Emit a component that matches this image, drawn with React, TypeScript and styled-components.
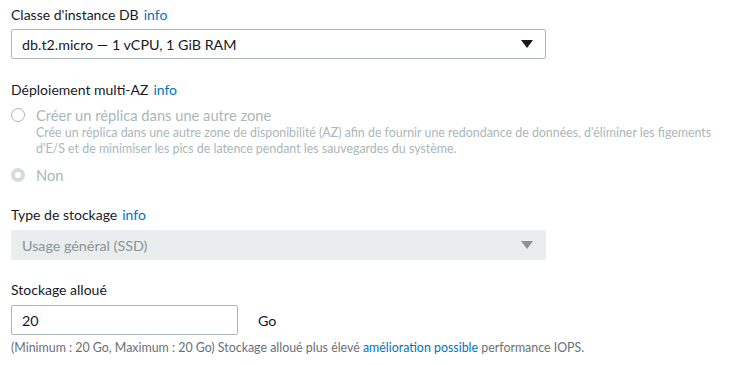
import React from 'react';
import styled, { createGlobalStyle } from 'styled-components';

const GlobalStyle = createGlobalStyle`
  body {
    margin: 0;
    background: #ffffff;
    font-family: Lato, "Open Sans", "Liberation Sans", sans-serif;
    color: #16191f;
  }
`;

const Page = styled.div`
  padding: 5px 11px 0 11px;
  display: flex;
  flex-direction: column;
`;

const Field = styled.div<{ $gap?: number }>`
  display: flex;
  flex-direction: column;
  margin-top: ${(p) => p.$gap ?? 0}px;
`;

const Label = styled.div<{ $space?: number }>`
  font-size: 14px;
  line-height: 20px;
  color: #16191f;
  margin-bottom: ${(p) => p.$space ?? 5}px;
  white-space: nowrap;
`;

const Info = styled.a`
  color: #0073bb;
  margin-left: 5px;
  text-decoration: none;
`;

const Select = styled.div<{ $disabled?: boolean }>`
  width: 535px;
  height: 30px;
  box-sizing: border-box;
  border: 1px solid ${(p) => (p.$disabled ? '#eaeded' : '#aab7b8')};
  background: ${(p) => (p.$disabled ? '#eaeded' : '#ffffff')};
  border-radius: 2px;
  display: flex;
  align-items: center;
  justify-content: space-between;
  padding: 0 12px 0 10px;
  font-size: 14.3px;
  color: ${(p) => (p.$disabled ? '#879596' : '#16191f')};
`;

const Caret = styled.svg`
  display: block;
`;

const RadioRow = styled.div<{ $gap?: number }>`
  display: flex;
  align-items: flex-start;
  margin-top: ${(p) => p.$gap ?? 0}px;
`;

const RadioDot = styled.span<{ $checked?: boolean }>`
  width: 14px;
  height: 14px;
  box-sizing: border-box;
  border-radius: 50%;
  flex-shrink: 0;
  margin-top: 3px;
  border: ${(p) => (p.$checked ? '4px solid #d5dbdb' : '1px solid #aab7b8')};
  background: #ffffff;
`;

const RadioText = styled.div`
  margin-left: 11px;
  display: flex;
  flex-direction: column;
`;

const RadioTitle = styled.div`
  font-size: 14.7px;
  line-height: 20px;
  color: #aab7b8;
  white-space: nowrap;
`;

const RadioDesc = styled.div`
  font-size: 12.4px;
  line-height: 16px;
  color: #aab7b8;
  white-space: nowrap;
`;

const InputRow = styled.div`
  display: flex;
  align-items: center;
`;

const TextInput = styled.div`
  width: 227px;
  height: 30px;
  box-sizing: border-box;
  border: 1px solid #aab7b8;
  border-radius: 2px;
  display: flex;
  align-items: center;
  padding: 0 10px;
  font-size: 14.3px;
  color: #16191f;
`;

const Unit = styled.span`
  margin-left: 20px;
  font-size: 14.3px;
  color: #16191f;
`;

const Hint = styled.div`
  margin-top: 5px;
  font-size: 12.4px;
  line-height: 16px;
  color: #687078;
  white-space: nowrap;
`;

const HintLink = styled.a`
  color: #0073bb;
  text-decoration: none;
`;

const Arrow = ({ color }: { color: string }) => (
  <Caret width="12" height="8" viewBox="0 0 12 8">
    <path d="M0 0 L12 0 L6 8 Z" fill={color} />
  </Caret>
);

export default function App() {
  return (
    <>
      <GlobalStyle />
      <Page>
        <Field>
          <Label $space={4}>
            Classe d'instance DB<Info>info</Info>
          </Label>
          <Select>
            <span>db.t2.micro — 1 vCPU, 1 GiB RAM</span>
            <Arrow color="#16191f" />
          </Select>
        </Field>

        <Field $gap={21}>
          <Label>
            Déploiement multi-AZ<Info>info</Info>
          </Label>
          <RadioRow>
            <RadioDot />
            <RadioText>
              <RadioTitle>Créer un réplica dans une autre zone</RadioTitle>
              <RadioDesc>
                Crée un réplica dans une autre zone de disponibilité (AZ) afin de fournir une redondance de données, d'éliminer les figements
                <br />
                d'E/S et de minimiser les pics de latence pendant les sauvegardes du système.
              </RadioDesc>
            </RadioText>
          </RadioRow>
          <RadioRow $gap={8}>
            <RadioDot $checked />
            <RadioText>
              <RadioTitle>Non</RadioTitle>
            </RadioText>
          </RadioRow>
        </Field>

        <Field $gap={20}>
          <Label>
            Type de stockage<Info>info</Info>
          </Label>
          <Select $disabled>
            <span>Usage général (SSD)</span>
            <Arrow color="#879596" />
          </Select>
        </Field>

        <Field $gap={20}>
          <Label>Stockage alloué</Label>
          <InputRow>
            <TextInput>20</TextInput>
            <Unit>Go</Unit>
          </InputRow>
          <Hint>
            (Minimum : 20 Go, Maximum : 20 Go) Stockage alloué plus élevé <HintLink>amélioration possible</HintLink> performance IOPS.
          </Hint>
        </Field>
      </Page>
    </>
  );
}
